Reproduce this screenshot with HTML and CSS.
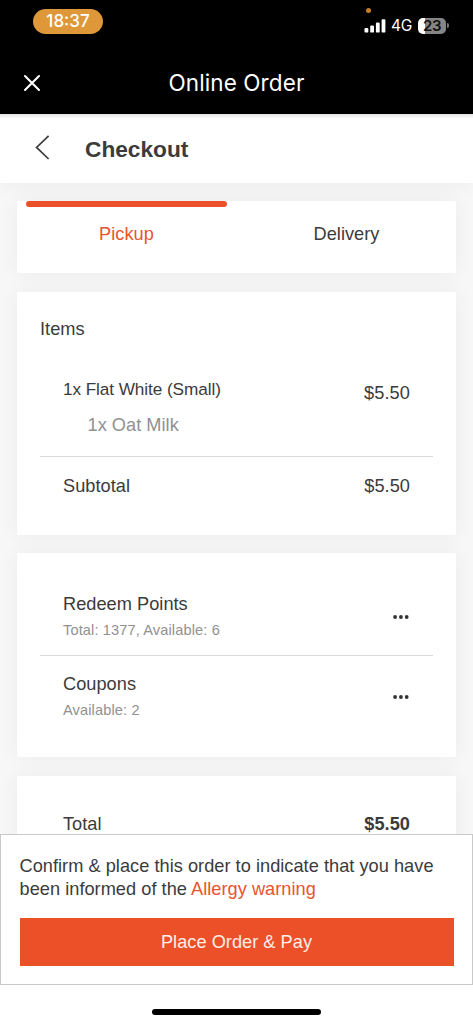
FILE: index.html
```
<!DOCTYPE html>
<html lang="en">
<head>
<meta charset="utf-8">
<title>Online Order</title>
<link rel="stylesheet" href="styles.css">
</head>
<body>
<div class="screen">
  <header class="app-header">
    <div class="status-bar">
      <span class="clock">18:37</span>
      <div class="status-right">
        <span class="mic-dot"></span>
        <div class="status-icons">
          <svg class="signal" width="22" height="14" viewBox="0 0 22 14" fill="#fff"><rect x="0.5" y="9" width="3.8" height="4.6" rx="1.2"/><rect x="6.2" y="6.4" width="3.8" height="7.2" rx="1.2"/><rect x="11.9" y="3.5" width="3.8" height="10.1" rx="1.2"/><rect x="17.6" y="0.2" width="3.8" height="13.4" rx="1.2"/></svg>
          <span class="network">4G</span>
          <span class="battery">23</span>
          <span class="battery-cap"></span>
        </div>
      </div>
    </div>
    <div class="title-bar">
      <svg class="close" width="18" height="18" viewBox="0 0 18 18" fill="none" stroke="#fff" stroke-width="2.1" stroke-linecap="round"><path d="M2 2L16 16M16 2L2 16"/></svg>
      <h1 class="app-title">Online Order</h1>
    </div>
  </header>
  <main class="content">
    <div class="page-bar">
      <svg class="back" width="16" height="26" viewBox="0 0 16 26" fill="none" stroke="#3b3b3b" stroke-width="1.7"><path d="M13.6 1.8L1.6 13.4L13.6 25"/></svg>
      <h2 class="page-title">Checkout</h2>
    </div>
    <div class="cards">
      <nav class="card tabs">
        <span class="tab tab-active">Pickup</span>
        <span class="tab">Delivery</span>
      </nav>
      <section class="card items">
        <h3 class="items-title">Items</h3>
        <div class="row item-row">
          <div>
            <div class="item-name">1x Flat White (Small)</div>
            <div class="item-option">1x Oat Milk</div>
          </div>
          <span class="item-price">$5.50</span>
        </div>
        <div class="row subtotal-row"><span class="subtotal-label">Subtotal</span><span>$5.50</span></div>
      </section>
      <section class="card rewards">
        <div class="row reward reward-first">
          <div><div class="reward-name">Redeem Points</div><div class="reward-note">Total: 1377, Available: 6</div></div>
          <svg class="more" width="18" height="6" viewBox="0 0 18 6" fill="#333"><circle cx="3.1" cy="3" r="1.9"/><circle cx="8.9" cy="3" r="1.9"/><circle cx="14.7" cy="3" r="1.9"/></svg>
        </div>
        <div class="row reward">
          <div><div class="reward-name">Coupons</div><div class="reward-note">Available: 2</div></div>
          <svg class="more" width="18" height="6" viewBox="0 0 18 6" fill="#333"><circle cx="3.1" cy="3" r="1.9"/><circle cx="8.9" cy="3" r="1.9"/><circle cx="14.7" cy="3" r="1.9"/></svg>
        </div>
      </section>
      <section class="card total">
        <div class="row"><span>Total</span><strong>$5.50</strong></div>
      </section>
    </div>
  </main>
  <footer class="confirm">
    <p class="confirm-text">Confirm &amp; place this order to indicate that you have<br>been informed of the <a class="allergy">Allergy warning</a></p>
    <button class="pay">Place Order &amp; Pay</button>
  </footer>
  <div class="home"><span class="home-bar"></span></div>
</div>
</body>
</html>
```
FILE: styles.css
```
* { box-sizing: border-box; }
body { margin: 0; background: #fff; }
h1, h2, h3, p { margin: 0; font-weight: 400; }
.screen {
  width: 473px; height: 1024px; overflow: hidden;
  display: flex; flex-direction: column;
  font: 18.2px/22px "Liberation Sans", Arial, sans-serif;
  letter-spacing: 0.03px;
  color: #3b3b3b; background: #fff;
}
.app-header { height: 114px; flex: none; background: #000; color: #fff; font-family: Inter, sans-serif; }
.status-bar { height: 52px; padding: 9px 24px 0 33px; display: flex; justify-content: space-between; align-items: flex-start; }
.clock { width: 70px; height: 25px; border-radius: 13px; background: #de983a; text-align: center; font-size: 17px; line-height: 25px; font-weight: 500; letter-spacing: 0; }
.status-right { width: 85px; }
.mic-dot { display: block; width: 5px; height: 5px; margin-top: -1.5px; margin-left: 2px; border-radius: 50%; background: #c87d2e; }
.status-icons { display: flex; align-items: center; height: 18px; margin-top: 4px; }
.signal { flex: none; }
.network { width: 27px; margin-left: 5px; font-size: 15.5px; letter-spacing: -0.3px; line-height: 18px; padding-top: 1px; }
.battery { width: 28px; height: 16px; border-radius: 5px; background: linear-gradient(90deg, #fff 7px, #858585 7px); color: #111; font-size: 15px; font-weight: 600; line-height: 16px; text-align: center; letter-spacing: -0.4px; }
.battery-cap { width: 2px; height: 5px; margin-left: 1px; background: #777; border-radius: 0 2px 2px 0; }
.title-bar { height: 62px; padding: 0 23px; display: grid; grid-template-columns: 40px 1fr 40px; align-items: center; }
.app-title { font-size: 22.5px; line-height: 28px; text-align: center; letter-spacing: 0.1px; }
.content { height: 720px; flex: none; overflow: hidden; background: #f7f7f7; }
.page-bar { height: 69px; padding: 0 35px; display: flex; align-items: center; gap: 34px; background: linear-gradient(#e4e4e4, #fff 5px); box-shadow: 0 0 20px rgba(0,0,0,.06); }
.back { margin-bottom: 3px; }
.page-title { font-size: 22.7px; font-weight: 700; line-height: 28px; padding-top: 1px; letter-spacing: 0; }
.cards { padding: 18px 17px 0; display: flex; flex-direction: column; gap: 18.5px; }
.card { background: #fff; box-shadow: 0 0 20px rgba(0,0,0,.05); }
.tabs { height: 72px; padding: 0 9px; display: flex; gap: 19px; }
.tab { flex: 1; border-top: 6px solid transparent; padding-top: 16px; text-align: center; }
.tab-active { color: #e75430; }
.tab-active::before { content: ""; display: block; height: 6px; margin: -22px 0 16px; border-radius: 3px; background: #ec5029; }
.items { height: 243px; padding: 26px 23px 0; }
.items-title { font-size: 18.2px; }
.row { padding: 0 23px; display: flex; justify-content: space-between; }
.item-row { height: 117px; padding-top: 38px; border-bottom: 1px solid #d9d9d9; }
.item-name { font-size: 17.2px; letter-spacing: -0.08px; }
.item-option { margin: 14px 0 0 24.5px; color: #919191; }
.item-price { padding-top: 4px; letter-spacing: 0.1px; }
.subtotal-row { padding-top: 18px; }
.rewards { height: 204px; padding: 23px 23px 0; }
.reward { height: 80px; padding-top: 17px; }
.reward-first { border-bottom: 1px solid #d9d9d9; }
.reward-name { line-height: 22px; }
.reward-note { margin-top: 6px; font-size: 14.6px; line-height: 18px; letter-spacing: 0.12px; color: #919191; }
.more { margin-top: 21px; }
.total { height: 100px; padding: 37px 23px 0; }
.confirm { height: 151px; flex: none; padding: 20px 18.5px 0; border: 1px solid #c9c9c9; background: #fff; }
.confirm-text { line-height: 23px; white-space: nowrap; }
.allergy { color: #e75430; }
.pay { display: block; width: 100%; height: 48px; margin-top: 17px; padding: 0; border: 0; background: #ec5029; color: #fdeee8; font: inherit; letter-spacing: inherit; }
.home { height: 39px; padding-top: 24px; }
.home-bar { display: block; width: 169px; height: 6px; margin: 0 auto; border-radius: 3px; background: #000; }
```
